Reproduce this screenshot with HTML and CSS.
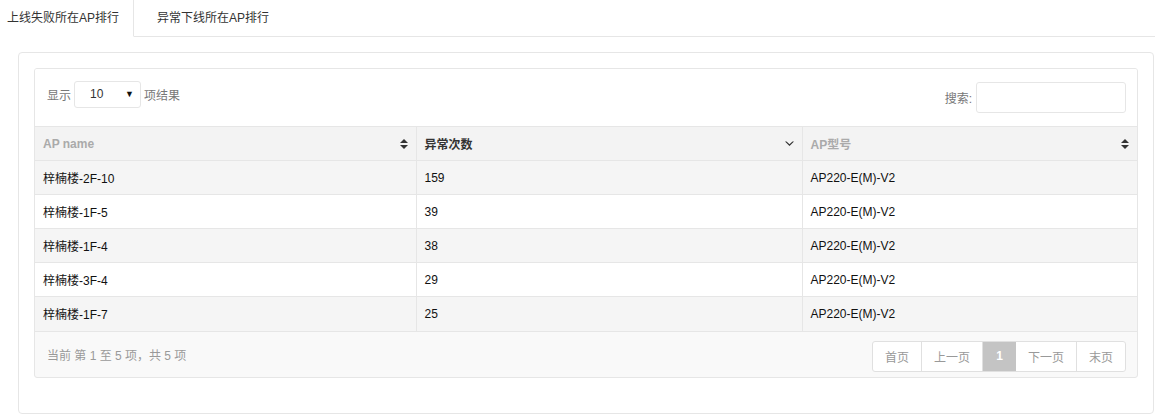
FILE: index.html
```html
<!DOCTYPE html>
<html lang="zh">
<head>
<meta charset="utf-8">
<link rel="stylesheet" href="styles.css">
</head>
<body>
<div class="tabs">
  <div class="tab active">上线失败所在AP排行</div>
  <div class="tab">异常下线所在AP排行</div>
  <div class="tab-fill"></div>
</div>
<div class="panel">
  <div class="box">
    <div class="toolbar">
      <div class="length">
        <span>显示</span>
        <div class="select"><span>10</span><span class="caret">▼</span></div>
        <span>项结果</span>
      </div>
      <div class="search">
        <span>搜索:</span>
        <div class="input"></div>
      </div>
    </div>
    <table class="grid">
      <thead>
        <tr>
          <th class="c1"><div class="th"><span class="muted">AP name</span>
            <svg class="sort" width="8" height="12" viewBox="0 0 8 12"><path d="M0 5L4 1L8 5Z M0 7L4 11L8 7Z" fill="#333"/></svg></div></th>
          <th class="c2"><div class="th"><span class="strong">异常次数</span>
            <svg class="sort" width="9" height="6" viewBox="0 0 9 6"><path d="M0 0.5L4.5 5L9 0.5L7.5 0.5L4.5 3.2L1.5 0.5Z" fill="#333"/></svg></div></th>
          <th class="c3"><div class="th"><span class="muted">AP型号</span>
            <svg class="sort" width="8" height="12" viewBox="0 0 8 12"><path d="M0 5L4 1L8 5Z M0 7L4 11L8 7Z" fill="#333"/></svg></div></th>
        </tr>
      </thead>
      <tbody>
        <tr class="odd"><td>梓楠楼-2F-10</td><td>159</td><td>AP220-E(M)-V2</td></tr>
        <tr><td>梓楠楼-1F-5</td><td>39</td><td>AP220-E(M)-V2</td></tr>
        <tr class="odd"><td>梓楠楼-1F-4</td><td>38</td><td>AP220-E(M)-V2</td></tr>
        <tr><td>梓楠楼-3F-4</td><td>29</td><td>AP220-E(M)-V2</td></tr>
        <tr class="odd"><td>梓楠楼-1F-7</td><td>25</td><td>AP220-E(M)-V2</td></tr>
      </tbody>
    </table>
    <div class="footer">
      <div class="info">当前 第 1 至 5 项，共 5 项</div>
      <div class="pager">
        <span class="pg w49">首页</span>
        <span class="pg w61">上一页</span>
        <span class="pg cur">1</span>
        <span class="pg w61">下一页</span>
        <span class="pg w48 last">末页</span>
      </div>
    </div>
  </div>
</div>
</body>
</html>
```

FILE: styles.css
```css
* { box-sizing: border-box; }
html, body { margin: 0; padding: 0; background: #fff; }
body {
  font-family: "Liberation Sans", "Noto Sans CJK SC", sans-serif;
  font-size: 12px;
  color: #333;
  width: 1155px;
  height: 414px;
  overflow: hidden;
}
.tabs { display: flex; height: 37px; }
.tab {
  height: 37px;
  line-height: 36px;
  padding: 0 23px;
  border-bottom: 1px solid #e6e6e6;
  white-space: nowrap;
}
.tab.active {
  width: 134px;
  padding: 0 0 0 7px;
  border-right: 1px solid #e6e6e6;
  border-bottom-color: transparent;
}
.tab-fill { flex: 1; border-bottom: 1px solid #e6e6e6; }

.panel {
  margin: 15px 1px 0 18px;
  height: 362px;
  border: 1px solid #e6e6e6;
  border-radius: 4px;
  padding: 15px 15px 0 15px;
}
.box {
  border: 1px solid #e6e6e6;
  border-radius: 3px;
  background: #f9f9f9;
  overflow: hidden;
}
.toolbar {
  background: #fff;
  height: 57px;
  display: flex;
  justify-content: space-between;
  align-items: center;
  padding: 0 11px 0 12px;
  color: #777;
}
.length { display: flex; align-items: center; gap: 3px; margin-top: -7px; }
.select {
  width: 67px;
  height: 27px;
  border: 1px solid #e6e6e6;
  border-radius: 3px;
  display: flex;
  align-items: center;
  justify-content: space-between;
  padding: 0 6px 0 15px;
  color: #333;
}
.select .caret { font-size: 9px; color: #111; }
.search { display: flex; align-items: center; gap: 4px; margin-top: 0; }
.input {
  width: 150px;
  height: 31px;
  border: 1px solid #e6e6e6;
  border-radius: 3px;
  background: #fff;
}

.grid { width: 100%; border-collapse: collapse; table-layout: fixed; }
.grid th, .grid td {
  height: 34px;
  border-top: 1px solid #e6e6e6;
  padding: 0 8px;
  text-align: left;
  color: #111;
}
.grid th { background: #f3f3f3; font-weight: bold; }
.grid td + td, .grid th + th { border-left: 1px solid #e6e6e6; }
.grid .c1 { width: 381px; }
.grid .c2 { width: 386px; }
.grid tbody tr { background: #fff; }
.grid tbody tr.odd { background: #f5f5f5; }
.th { display: flex; justify-content: space-between; align-items: center; }
.muted { color: #aaa; }
.strong { color: #333; }
.sort { display: block; }

.footer {
  height: 46px;
  border-top: 1px solid #e6e6e6;
  display: flex;
  justify-content: space-between;
  align-items: center;
  padding: 0 11px 0 12px;
}
.info { color: #999; }
.pager {
  display: flex;
  border: 1px solid #e0e0e0;
  border-radius: 3px;
  background: #fff;
  height: 31px;
  margin-top: 4px;
}
.pg {
  display: flex;
  align-items: center;
  justify-content: center;
  color: #999;
  border-right: 1px solid #e0e0e0;
}
.pg.last { border-right: 0; }
.w48 { width: 48px; }
.w49 { width: 49px; }
.w61 { width: 61px; }
.pg.cur { width: 33px; background: #c4c4c4; color: #fff; border-right: 0; font-weight: bold; }
```
